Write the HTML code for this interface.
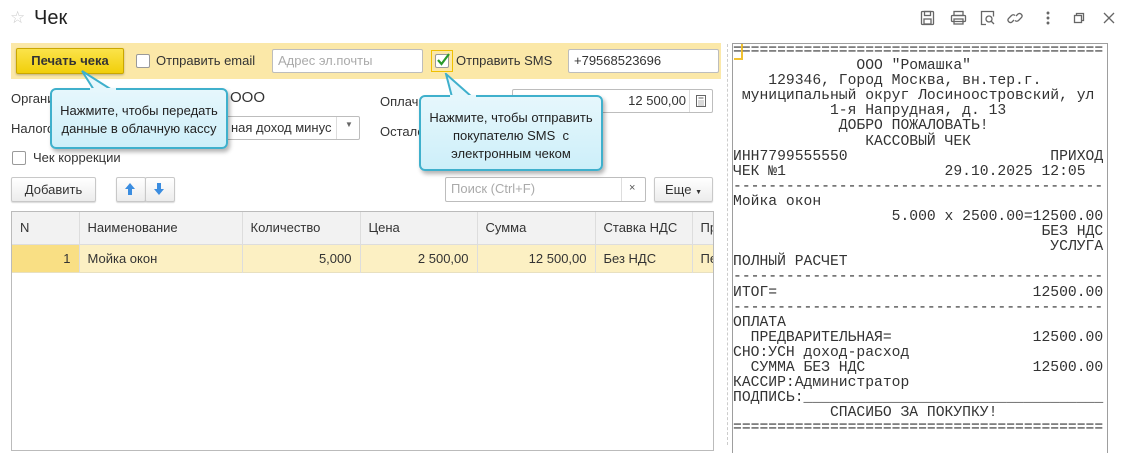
<!DOCTYPE html>
<html><head><meta charset="utf-8"><style>
*{box-sizing:border-box;margin:0;padding:0}
body{width:1127px;height:445px;overflow:hidden;background:#fff;font-family:"Liberation Sans",Arial,sans-serif;font-size:13px;color:#333;position:relative}
.a{position:absolute}
.inp{position:absolute;border:1px solid #bdbdbd;background:#fff;border-radius:2px;height:24px;line-height:22px;padding:0 5px}
.btn{position:absolute;border:1px solid #c8c8c8;border-radius:2px;background:linear-gradient(#fff,#ececec);height:25px;line-height:23px;text-align:center;color:#333;box-shadow:0 1px 1px rgba(0,0,0,.15)}
.cb{position:absolute;width:14px;height:14px;border:1px solid #9a9a9a;background:#fff;border-radius:2px}
.tip{position:absolute;background:linear-gradient(#e6f7fc,#cdeff9);border:2px solid #3fb0cc;border-radius:6px;text-align:center;font-size:13px;color:#222;line-height:18px;box-shadow:2px 3px 4px rgba(0,0,0,.3)}
.rc{position:absolute;left:733px;top:41px;font-family:"Liberation Mono",monospace;font-size:14.7px;line-height:15.1px;white-space:pre;color:#333}
th,td{font-weight:normal;text-align:left;padding:0 8px;border-right:1px solid #ddd;white-space:nowrap;overflow:hidden}
</style></head><body>
<div class="a" style="left:10px;top:8px;color:#ccc;font-size:17px">☆</div>
<div class="a" style="left:34px;top:7px;font-size:20px;color:#222">Чек</div>
<svg class="a" style="left:918px;top:8px" width="200" height="20" fill="none" stroke="#666" stroke-width="1.3">
<rect x="3.5" y="3.5" width="12" height="13" rx="1"/><rect x="6.5" y="3.5" width="6" height="4"/><rect x="6" y="11" width="7" height="5"/>
<rect x="36" y="3.5" width="9" height="4"/><rect x="33.5" y="7.5" width="14" height="6" rx="1"/><rect x="36" y="11" width="9" height="5"/>
<path d="M68 16.5h-4.5v-13h12v5"/><circle cx="71" cy="11" r="3"/><path d="M73 13l3 3"/>
<path d="M96 12l-2 2a2.5 2.5 0 01-3.5-3.5l3-3a2.5 2.5 0 013.5 0M98 8l2-2a2.5 2.5 0 013.5 3.5l-3 3a2.5 2.5 0 01-3.5 0"/>
<circle cx="130" cy="5" r=".8" fill="#666"/><circle cx="130" cy="10" r=".8" fill="#666"/><circle cx="130" cy="15" r=".8" fill="#666"/>
<rect x="156.5" y="7.5" width="7" height="7"/><path d="M158.5 7.5v-2h7v7h-2"/>
<path d="M186 5l10 10M196 5l-10 10"/>
</svg>
<div class="a" style="left:11px;top:43px;width:710px;height:36px;background:#fbe8a8"></div>
<div class="a" style="left:16px;top:48px;width:108px;height:26px;background:linear-gradient(#fbe34a,#f1cf0a);border:1px solid #caa700;border-radius:2px;text-align:center;line-height:24px;font-weight:bold;color:#333;box-shadow:0 1px 2px rgba(0,0,0,.25)">Печать чека</div>
<div class="cb" style="left:136px;top:54px"></div>
<div class="a" style="left:156px;top:53px">Отправить email</div>
<div class="inp" style="left:272px;top:49px;width:151px;color:#aaa">Адрес эл.почты</div>
<div class="a" style="left:431px;top:50px;width:22px;height:22px;border:1px solid #f0c000"></div>
<div class="cb" style="left:435px;top:54px"></div>
<svg class="a" style="left:435px;top:52px" width="16" height="16"><path d="M3 8l3.5 4L14 2" stroke="#2a9a2a" stroke-width="2.2" fill="none"/></svg>
<div class="a" style="left:456px;top:53px">Отправить SMS</div>
<div class="inp" style="left:568px;top:49px;width:151px;color:#333">+79568523696</div>
<div class="a" style="left:11px;top:91px">Организация:</div>
<div class="a" style="left:230px;top:89px;font-size:15px;color:#333">ООО</div>
<div class="a" style="left:11px;top:121px">Налогообложение:</div>
<div class="inp" style="left:200px;top:116px;width:160px;padding-left:30px">ная доход минус</div>
<div class="a" style="left:336px;top:117px;width:1px;height:22px;background:#ddd"></div>
<div class="a" style="left:345px;top:120px;font-size:8px;color:#666">▼</div>
<div class="a" style="left:380px;top:94px">Оплачено:</div>
<div class="a" style="left:380px;top:124px">Осталось:</div>
<div class="inp" style="left:512px;top:89px;width:201px;text-align:right;padding-right:26px">12 500,00</div>
<div class="a" style="left:689px;top:90px;width:1px;height:22px;background:#ddd"></div>
<svg class="a" style="left:695px;top:94px" width="12" height="14" fill="none" stroke="#666"><rect x="1.5" y="1.5" width="9" height="11"/><path d="M3.5 4h5M3.5 7h1M5.5 7h1M7.5 7h1M3.5 9h1M5.5 9h1M7.5 9h1M3.5 11h1M5.5 11h1M7.5 11h1"/></svg>
<div class="cb" style="left:12px;top:151px"></div>
<div class="a" style="left:33px;top:150px">Чек коррекции</div>
<div class="btn" style="left:11px;top:177px;width:85px">Добавить</div>
<div class="btn" style="left:116px;top:177px;width:30px"></div>
<div class="btn" style="left:145px;top:177px;width:30px"></div>
<svg class="a" style="left:122px;top:181px" width="50" height="16"><path d="M8 2l5 6h-3v6h-4v-6h-3z" fill="#3b8de0"/><path d="M37 14l5-6h-3v-6h-4v6h-3z" fill="#3b8de0"/></svg>
<div class="inp" style="left:445px;top:177px;width:201px;color:#aaa;height:25px">Поиск (Ctrl+F)</div>
<div class="a" style="left:621px;top:178px;width:1px;height:23px;background:#ddd"></div>
<div class="a" style="left:629px;top:182px;font-size:11px;color:#555">×</div>
<div class="btn" style="left:654px;top:177px;width:59px">Еще <span style="font-size:7px">▼</span></div>
<div class="a" style="left:11px;top:211px;width:703px;height:240px;border:1px solid #bbb;overflow:hidden">
<table style="border-collapse:collapse;width:720px;table-layout:fixed">
<colgroup><col style="width:67px"><col style="width:163px"><col style="width:118px"><col style="width:117px"><col style="width:118px"><col style="width:97px"><col style="width:40px"></colgroup>
<tr style="height:32px;background:#f2f2f2;border-bottom:1px solid #ddd"><th>N</th><th>Наименование</th><th>Количество</th><th>Цена</th><th>Сумма</th><th>Ставка НДС</th><th>Пр</th></tr>
<tr style="height:28px;background:#fcf0c3;border-bottom:1px solid #e8e0c0"><td style="text-align:right;background:#f9df84">1</td><td>Мойка окон</td><td style="text-align:right">5,000</td><td style="text-align:right">2 500,00</td><td style="text-align:right">12 500,00</td><td>Без НДС</td><td>Пе</td></tr>
</table></div>
<div class="a" style="left:727px;top:44px;height:401px;border-left:1px dashed #ccc"></div>
<div class="a" style="left:732px;top:43px;width:376px;height:410px;border:1px solid #9e9e9e;border-bottom:none"></div>
<div class="a" style="left:734px;top:44px;width:9px;height:16px;border-right:2px solid #f2c230;border-bottom:2px solid #f2c230"></div>
<div class="rc" style="top:44px">==========================================
              ООО "Ромашка"
    129346, Город Москва, вн.тер.г.
 муниципальный округ Лосиноостровский, ул
           1-я Напрудная, д. 13
            ДОБРО ПОЖАЛОВАТЬ!
               КАССОВЫЙ ЧЕК
ИНН7799555550                       ПРИХОД
ЧЕК №1                  29.10.2025 12:05
------------------------------------------
Мойка окон
                  5.000 x 2500.00=12500.00
                                   БЕЗ НДС
                                    УСЛУГА
ПОЛНЫЙ РАСЧЕТ
------------------------------------------
ИТОГ=                             12500.00
------------------------------------------
ОПЛАТА
  ПРЕДВАРИТЕЛЬНАЯ=                12500.00
СНО:УСН доход-расход
  СУММА БЕЗ НДС                   12500.00
КАССИР:Администратор
ПОДПИСЬ:__________________________________
           СПАСИБО ЗА ПОКУПКУ!
==========================================</div>
<div class="tip" style="left:50px;top:88px;width:178px;height:61px;padding-top:12px">Нажмите, чтобы передать<br>данные в облачную кассу</div>
<svg class="a" style="left:80px;top:70px" width="40" height="22"><path d="M2 1L14 20H32Z" fill="#e6f7fc" stroke="#3fb0cc" stroke-width="2"/><rect x="10" y="18" width="26" height="5" fill="#e6f7fc"/></svg>
<div class="tip" style="left:419px;top:95px;width:184px;height:76px;padding-top:12px">Нажмите, чтобы отправить<br>покупателю SMS&nbsp; с<br>электронным чеком</div>
<svg class="a" style="left:444px;top:73px" width="40" height="26"><path d="M2 1L8 24H28Z" fill="#e6f7fc" stroke="#3fb0cc" stroke-width="2"/><rect x="6" y="22" width="26" height="5" fill="#e6f7fc"/></svg>
</body></html>
